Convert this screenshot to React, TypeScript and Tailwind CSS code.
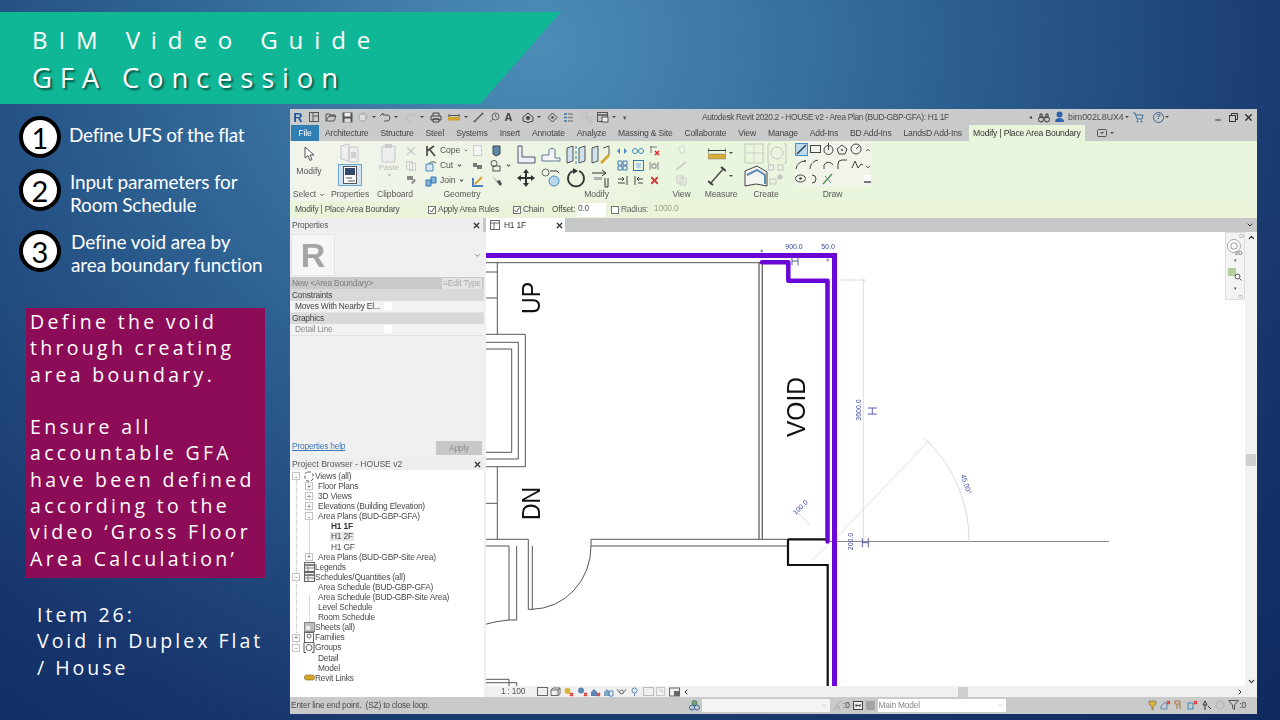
import type { ReactNode } from "react";
import { ChevronDown, ChevronLeft, ChevronRight, ChevronUp, Minus, X } from "lucide-react";

const ui = "[font-family:'Liberation_Sans',Arial,sans-serif]";
const slide = "[font-family:'Open_Sans',Lato,sans-serif]";
const small = "text-[8.4px] tracking-[-0.2px]";

const Svg = ({ w = 14, h = 14, children }: { w?: number; h?: number; children: ReactNode }) => (
  <svg width={w} height={h} viewBox={`0 0 ${w} ${h}`} fill="none" className="shrink-0">
    {children}
  </svg>
);

const Dot = () => <span className="mx-[1px] h-0 w-0 shrink-0 border-x-[2px] border-t-[2px] border-x-transparent border-t-[#444]" />;

const steps = [
  { n: "1", lines: ["Define UFS of the flat"], box: "mb-[11px]", text: "-mt-[5px] ml-[8px] tracking-[-0.3px]" },
  { n: "2", lines: ["Input parameters for", "Room Schedule"], box: "mb-[19px]", text: "mt-[6px] ml-[9px] tracking-[-0.2px]" },
  { n: "3", lines: ["Define void area by", "area boundary function"], box: "", text: "mt-[3px] ml-[10px] tracking-[-0.1px]" },
];

const voidNote = [
  "Define the void",
  "through creating",
  "area boundary.",
  "\u00a0",
  "Ensure all",
  "accountable GFA",
  "have been defined",
  "according to the",
  "video \u2018Gross Floor",
  "Area Calculation\u2019",
];

const tabs = [
  "Architecture", "Structure", "Steel", "Systems", "Insert", "Annotate", "Analyze", "Massing & Site",
  "Collaborate", "View", "Manage", "Add-Ins", "BD Add-Ins", "LandsD Add-Ins",
];

function StepBadge({ n }: { n: string }) {
  return (
    <div className="flex h-[42px] w-[42px] shrink-0 items-center justify-center rounded-full border-[4.5px] border-black bg-white text-[29px] leading-none text-black [font-family:Lato,sans-serif]">
      {n}
    </div>
  );
}

function LeftColumn() {
  return (
    <div className={`${slide} w-[290px] shrink-0 text-white`}>
      <div className="pl-[19px] pt-[7px]">
        {steps.map((s) => (
          <div key={s.n} className={`flex h-[42px] items-center ${s.box}`}>
            <StepBadge n={s.n} />
            <div className={`whitespace-nowrap text-[19px] leading-[23px] [font-family:Lato,sans-serif] ${s.text}`}>
              {s.lines.map((l) => (
                <div key={l}>{l}</div>
              ))}
            </div>
          </div>
        ))}
      </div>
      <div className="ml-[26px] mt-[36px] h-[270px] w-[239px] bg-[#8d0c58] pl-[4px] pt-[1px] text-[19.5px] leading-[26.3px] tracking-[3.300px]">
        {voidNote.map((l, i) => (
          <div key={i} className="whitespace-nowrap">{l}</div>
        ))}
      </div>
      <div className="ml-[37px] mt-[24px] text-[19.5px] leading-[26.3px] tracking-[3px]">
        <div>Item 26:</div>
        <div>Void in Duplex Flat</div>
        <div>/ House</div>
      </div>
    </div>
  );
}

function QuickAccess() {
  return (
    <div className="flex h-full w-[412px] shrink-0 items-center">
      <div className="flex w-[16px] justify-center text-[13px] font-bold leading-none text-[#1c5a9c]">R</div>
      <div className="flex w-[16px] justify-center">
        <Svg w={10} h={10}><rect x=".5" y=".5" width="9" height="9" stroke="#555" /><path d="M4 1v8M4 4h5" stroke="#555" /></Svg>
      </div>
      <div className="flex w-[17px] justify-center">
        <Svg w={12} h={10}><path d="M1 2h4l1 1h4v1H4L1 9zM1 9h8l2-5H4" stroke="#555" /></Svg>
      </div>
      <div className="flex w-[16px] justify-center">
        <Svg w={11} h={11}><rect x=".5" y=".5" width="10" height="10" fill="#555" /><rect x="2.5" y="1" width="6" height="3.5" fill="#eee" /><rect x="2.5" y="6.5" width="6" height="4" fill="#ddd" /></Svg>
      </div>
      <div className="flex w-[16px] justify-center">
        <Svg w={12} h={12}><circle cx="6" cy="6" r="5" fill="#b9b9b9" /><path d="M3 4h5v5H3z" fill="#ddd" /></Svg>
      </div>
      <Dot />
      <div className="flex w-[16px] justify-center">
        <Svg w={12} h={10}><path d="M1 4l3-3v2h4a3 3 0 0 1 0 6H5" stroke="#555" /></Svg>
      </div>
      <Dot />
      <div className="ml-[4px] flex w-[16px] justify-center">
        <Svg w={12} h={10}><path d="M11 4L8 1v2H4a3 3 0 0 0 0 6h3" stroke="#bbb" /></Svg>
      </div>
      <Dot />
      <div className="ml-[2px] flex w-[18px] justify-center">
        <Svg w={12} h={11}><path d="M3 4V1h6v3M1 4h10v4H9V7H3v1H1zM3 7h6v3H3z" stroke="#444" /></Svg>
      </div>
      <div className="flex w-[18px] justify-center">
        <Svg w={12} h={10}><path d="M1 2v3M11 2v3M1 3.5h10" stroke="#555" /><rect y="5" width="12" height="3.5" fill="#d3a62f" /></Svg>
      </div>
      <Dot />
      <div className="ml-[2px] flex w-[15px] justify-center">
        <Svg w={11} h={11}><path d="M1.5 9.5l8-8" stroke="#555" strokeWidth="1.2" /><circle cx="1.5" cy="9.5" r="1" fill="#555" /><circle cx="9.5" cy="1.5" r="1" fill="#555" /></Svg>
      </div>
      <div className="flex w-[16px] justify-center">
        <Svg w={11} h={11}><circle cx="6.5" cy="4.5" r="3.5" stroke="#666" /><path d="M4 7l-3 3" stroke="#666" /><path d="M6.5 2.5v2l1.5 1" stroke="#666" /></Svg>
      </div>
      <div className="flex w-[13px] justify-center text-[11px] font-bold leading-none text-[#444]">A</div>
      <div className="ml-[5px] flex w-[16px] justify-center">
        <Svg w={12} h={12}><path d="M1 6l5-4 5 4v4l-5 1.5L1 10z" stroke="#444" /><circle cx="6" cy="7" r="2" fill="#444" /></Svg>
      </div>
      <Dot />
      <div className="ml-[2px] flex w-[16px] justify-center">
        <Svg w={11} h={11}><path d="M5.5 1l4.5 4.5L5.5 10 1 5.5z" stroke="#444" /><circle cx="5.5" cy="5.5" r="1.3" fill="#444" /></Svg>
      </div>
      <div className="flex w-[16px] justify-center">
        <Svg w={11} h={11}><path d="M1 2h3M1 5.5h3M1 9h3" stroke="#3b74ad" strokeWidth="1.5" /><path d="M5 2h5M5 5.5h5M5 9h5" stroke="#888" strokeWidth="1.5" /></Svg>
      </div>
      <div className="ml-[3px] flex w-[16px] justify-center">
        <Svg w={12} h={12}><rect x="1" y="1" width="5" height="5" stroke="#bbb" /><rect x="6" y="6" width="5" height="5" stroke="#bbb" /></Svg>
      </div>
      <div className="flex w-[16px] justify-center">
        <Svg w={12} h={11}><rect x=".5" y=".5" width="10" height="9" stroke="#555" /><path d="M1 3h9" stroke="#555" strokeWidth="1.5" /><rect x="5" y="5" width="6" height="5" fill="#eee" stroke="#555" /></Svg>
      </div>
      <Dot />
      <span className="ml-[6px] text-[7px] leading-none text-[#555]">▾</span>
    </div>
  );
}

function TitleBar() {
  return (
    <div className={`flex h-[16px] items-center bg-[#c9caca] text-[#4a4a4a] ${ui}`}>
      <QuickAccess />
      <span className="whitespace-nowrap text-[8.4px] leading-none tracking-[-0.35px]">Autodesk Revit 2020.2 - HOUSE v2 - Area Plan (BUD-GBP-GFA): H1 1F</span>
      <div className="ml-auto flex items-center pr-[3px]">
        <span className="text-[6px] leading-none">◂</span>
        <div className="ml-[6px]">
          <Svg w={12} h={11}><circle cx="3" cy="7.5" r="2.5" stroke="#333" /><circle cx="9" cy="7.5" r="2.5" stroke="#333" /><path d="M2 6V2h2v4M8 6V2h2v4M5 5h2" stroke="#333" /></Svg>
        </div>
        <div className="ml-[4px]">
          <Svg w={11} h={12}><circle cx="5.5" cy="3.5" r="3" fill="#2d62ad" /><path d="M1 11c0-3 2-4 4.5-4s4.5 1 4.5 4z" fill="#2d62ad" /></Svg>
        </div>
        <span className="ml-[3px] w-[56px] whitespace-nowrap text-[8.8px] leading-none">bim002L8UX4</span>
        <Dot />
        <div className="ml-[2px]">
          <Svg w={12} h={11}><path d="M1 1h2l2 6h5l1-4H4" stroke="#3d6f9c" /><circle cx="5.5" cy="9.5" r="1" fill="#3d6f9c" /><circle cx="9.5" cy="9.5" r="1" fill="#3d6f9c" /></Svg>
        </div>
        <div className="ml-[9px] flex h-[11px] w-[11px] items-center justify-center rounded-full border border-[#3d5f94] text-[8px] font-bold leading-none text-[#3d5f94]">?</div>
        <Dot />
        <Minus size={8} strokeWidth={3} className="ml-[44px] mt-[5px] text-[#333]" />
        <div className="ml-[7px]">
          <Svg w={9} h={9}><rect x=".5" y="2.5" width="6" height="6" stroke="#333" /><path d="M2.5 2.5v-2h6v6h-2" stroke="#333" /></Svg>
        </div>
        <X size={11} strokeWidth={2.6} className="ml-[5px] text-[#222]" />
      </div>
    </div>
  );
}

function TabBar() {
  return (
    <div className={`flex h-[16px] items-stretch bg-[#c9caca] text-[8.6px] tracking-[-0.2px] text-[#454545] ${ui}`}>
      <div className="ml-[1px] flex w-[28px] items-center justify-center bg-[#2f7fb5] text-white">File</div>
      <div className="ml-[6px] flex items-center gap-[12px]">
        {tabs.map((t) => (
          <span key={t} className="whitespace-nowrap">{t}</span>
        ))}
      </div>
      <div className="ml-[7px] flex w-[116px] items-center justify-center whitespace-nowrap bg-[#e9f5da] text-[#333]">
        Modify | Place Area Boundary
      </div>
      <div className="ml-[12px] flex items-center gap-[2px]">
        <Svg w={10} h={8}><rect x=".5" y=".5" width="9" height="7" rx="1" stroke="#555" /><path d="M3 3h4L5 5z" fill="#555" /></Svg>
        <Dot />
      </div>
    </div>
  );
}

const Panel = ({ w, label, children }: { w: string; label: ReactNode; children: ReactNode }) => (
  <div className={`flex shrink-0 flex-col ${w}`}>
    <div className="h-[45px]">{children}</div>
    <div className="flex h-[15px] items-center justify-center gap-[3px] whitespace-nowrap pt-[2px] text-[8.6px] tracking-[-0.1px] text-[#5a5a5a]">{label}</div>
  </div>
);

const Row = ({ children, className = "" }: { children: ReactNode; className?: string }) => (
  <div className={`flex h-[15px] items-center ${className}`}>{children}</div>
);

const Tool = ({ children, className = "w-[19px]" }: { children: ReactNode; className?: string }) => (
  <div className={`flex shrink-0 justify-center ${className}`}>{children}</div>
);

const SmallTool = ({ children }: { children: ReactNode }) => <Tool className="w-[16px]">{children}</Tool>;

function Ribbon() {
  return (
    <div className={`flex h-[60px] bg-[linear-gradient(90deg,#f1f4ec,#e9f5dc_45%)] ${ui}`}>
      <Panel w="w-[38px]" label={<>Select <ChevronDown size={6} strokeWidth={4} /></>}>
        <div className="flex flex-col items-center pt-[5px]">
          <Svg w={12} h={16}><path d="M2 1v11l3-2.5 2 5 2-1-2-4.5h4z" stroke="#555" fill="#fff" /></Svg>
          <span className="mt-[3px] text-[8.6px] text-[#555]">Modify</span>
        </div>
      </Panel>
      <Panel w="w-[44px]" label="Properties">
        <div className="flex flex-col items-center pt-[2px]">
          <Svg w={20} h={20}><path d="M1 3l8-2v17l-8-2zM9 4h9v15H9z" stroke="#c6c6c6" fill="#eee" /><rect x="11" y="9" width="5" height="6" fill="#cfcfcf" /></Svg>
          <div className="mt-[1px] flex h-[22px] w-[24px] items-center justify-center border border-[#6ea5d0] bg-[#cfe3f3]">
            <Svg w={14} h={18}><rect x=".5" y=".5" width="13" height="17" fill="#fff" stroke="#555" /><rect x="2" y="2" width="10" height="7" fill="#34496b" /><path d="M3 12h6M5 15h7" stroke="#555" /></Svg>
          </div>
        </div>
      </Panel>
      <Panel w="w-[46px]" label="Clipboard">
        <div className="flex">
          <div className="flex w-[34px] flex-col items-center pt-[2px] text-[8px] leading-none text-[#bbb]">
            <Svg w={16} h={20}><rect x="1" y="3" width="13" height="16" rx="1" stroke="#c4c4c4" fill="#eee" /><rect x="4" y="1" width="7" height="4" fill="#ccc" /></Svg>
            <span className="mt-[1px]">Paste</span>
            <span className="text-[6px]">▾</span>
          </div>
          <div className="flex flex-col pt-[2px]">
            <Row><Svg w={10} h={10}><path d="M1 1l8 8M9 1L1 9" stroke="#c9c9c9" strokeWidth="1.4" /></Svg></Row>
            <Row><Svg w={10} h={10}><rect x=".5" y=".5" width="6" height="8" stroke="#ccc" /><rect x="3.5" y="2" width="6" height="7.5" stroke="#ccc" /></Svg></Row>
            <Row><Svg w={11} h={11}><path d="M1 1h6v4H1zM7 9l3-4-2-1-3 4z" fill="#8a8a8a" /></Svg></Row>
          </div>
        </div>
      </Panel>
      <Panel w="w-[88px]" label="Geometry">
        <div className="flex pt-[2px] text-[8.6px] tracking-[-0.1px] text-[#555]">
          <div className="flex w-[50px] flex-col pl-[7px]">
            <Row className="gap-[3px]"><Svg w={12} h={12}><path d="M2 1v10M2 6l7-5M5 5l5 6" stroke="#444" strokeWidth="1.6" /></Svg>Cope<ChevronDown size={5} strokeWidth={5} className="ml-[1px]" /></Row>
            <Row className="gap-[3px]"><Svg w={12} h={12}><path d="M1 4h7v7H1z" stroke="#4d86bd" fill="#d7e6f3" /><path d="M4 4a4 3 0 0 1 7-1" stroke="#555" /></Svg>Cut<ChevronDown size={5} strokeWidth={5} className="ml-[1px]" /></Row>
            <Row className="gap-[3px]"><Svg w={12} h={12}><path d="M1 5h5v6H1zM6 2h5v6H6z" fill="#7fb2db" stroke="#3b79b0" /></Svg>Join<ChevronDown size={5} strokeWidth={5} className="ml-[1px]" /></Row>
          </div>
          <div className="flex flex-col">
            <Row><Tool><Svg w={9} h={11}><rect x=".5" y=".5" width="8" height="10" stroke="#ccc" fill="#f4f4f4" /></Svg></Tool><Tool><Svg w={11} h={12}><path d="M2 1h7v8l-4 2-3-2z" fill="#5d86a8" stroke="#444" /></Svg></Tool></Row>
            <Row><Tool><Svg w={11} h={11}><path d="M1 3h4v4H1zM5 5h5v4H5z" fill="#777" /></Svg></Tool><Tool><Svg w={13} h={12}><circle cx="4" cy="3.5" r="3" stroke="#555" /><rect x="3" y="6" width="7" height="5" stroke="#555" /></Svg></Tool><ChevronDown size={5} strokeWidth={5} /></Row>
            <Row><Tool><Svg w={12} h={12}><path d="M1 3v8h10" stroke="#4a82b7" strokeWidth="2" /><path d="M3 9l7-7" stroke="#d1a431" strokeWidth="2" /></Svg></Tool><Tool><Svg w={11} h={11}><path d="M1 1l5 5 3-1 2 4-2 2-3-4z" fill="#555" /></Svg></Tool></Row>
          </div>
        </div>
      </Panel>
      <Panel w="w-[157px]" label={<span className="pl-[24px]">Modify</span>}>
        <div className="flex pt-[2px]">
          <div className="flex w-[108px] flex-col pl-[7px]">
            <div className="flex h-[23px] items-center">
              <Tool className="w-[25px]"><Svg w={20} h={20}><path d="M2 1h4v11h13v6H2z" stroke="#556" fill="#e9f0f7" /></Svg></Tool>
              <Tool className="w-[25px]"><Svg w={20} h={16}><path d="M1 14h18v-3h-5V3c0-2-6-2-6 0v5H1z" stroke="#5c7b97" fill="#f4f4f4" /></Svg></Tool>
              <Tool className="w-[25px]"><Svg w={20} h={20}><path d="M1 3l6-2v15l-6 2zM13 3l6-2v15l-6 2z" stroke="#555" fill="#cfe2ef" /><path d="M10 1v18" stroke="#2f7fb5" strokeDasharray="3 2" /></Svg></Tool>
              <Tool className="w-[25px]"><Svg w={20} h={20}><path d="M1 3l6-2v15l-6 2z" stroke="#555" fill="#cfe2ef" /><path d="M12 3l6-2v9" stroke="#555" /><path d="M10 18l8-8" stroke="#d1a431" strokeWidth="2.5" /></Svg></Tool>
            </div>
            <div className="flex h-[23px] items-center">
              <Tool className="w-[25px]"><Svg w={20} h={20}><path d="M10 1l3 4h-2v4h4V7l4 3-4 3v-2h-4v4h2l-3 4-3-4h2v-4H5v2l-4-3 4-3v2h4V5H7z" fill="#333" /></Svg></Tool>
              <Tool className="w-[25px]"><Svg w={20} h={19}><rect x="1" y="1" width="7" height="7" rx="3.5" stroke="#666" /><circle cx="13" cy="13" r="5" fill="#bcd7ea" stroke="#4a8cbf" /><path d="M9 3h7l2 2" stroke="#333" /></Svg></Tool>
              <Tool className="w-[25px]"><Svg w={20} h={20}><path d="M13 3a8 8 0 1 1-6 0" stroke="#333" strokeWidth="1.8" /><path d="M7 0v6l5-3z" fill="#333" /></Svg></Tool>
              <Tool className="w-[25px]"><Svg w={20} h={20}><path d="M1 5h14M11 2l4 3-4 3" stroke="#333" /><path d="M3 9h8v3H3z" fill="#b0b0b0" /><path d="M14 10v9h3v-9" stroke="#333" /></Svg></Tool>
            </div>
          </div>
          <div className="flex w-[49px] flex-col">
            <Row><SmallTool><Svg w={12} h={8}><path d="M1 4l3-3v6zM11 4L8 1v6z" fill="#4a8cbf" /></Svg></SmallTool><SmallTool><Svg w={12} h={10}><circle cx="3" cy="5" r="2.5" stroke="#4a8cbf" /><circle cx="9" cy="5" r="2.5" stroke="#4a8cbf" /></Svg></SmallTool><SmallTool><Svg w={11} h={11}><path d="M2 1v7M1 2h7" stroke="#777" /><path d="M6 6l4 4M10 6l-4 4" stroke="#d23" strokeWidth="1.5" /></Svg></SmallTool></Row>
            <Row><SmallTool><Svg w={11} h={11}><path d="M1 1h4v4H1zM6 1h4v4H6zM1 6h4v4H1zM6 6h4v4H6z" stroke="#3d79ae" /></Svg></SmallTool><SmallTool><Svg w={11} h={11}><rect x=".5" y=".5" width="10" height="10" stroke="#3d79ae" /><rect x="3" y="3" width="5" height="5" fill="#b8d2e7" /></Svg></SmallTool><SmallTool><Svg w={10} h={10}><path d="M1 1v8M9 1v8M3 3h4v4H3z" stroke="#888" /></Svg></SmallTool></Row>
            <Row><SmallTool><Svg w={11} h={11}><path d="M1 4h6M5 2l2 2-2 2M1 8h7M10 1v9" stroke="#444" /></Svg></SmallTool><SmallTool><Svg w={11} h={11}><path d="M10 4H4M6 2L4 4l2 2M2 1v9M5 8h5" stroke="#444" /></Svg></SmallTool><SmallTool><X size={11} strokeWidth={4} className="text-[#d23a3a]" /></SmallTool></Row>
          </div>
        </div>
      </Panel>
      <Panel w="w-[37px]" label="View">
        <div className="flex flex-col items-center pt-[2px]">
          <Row><Svg w={10} h={11}><path d="M5 1a3 3 0 0 1 2 5v2H3V6a3 3 0 0 1 2-5z" stroke="#d4d4d4" /></Svg></Row>
          <Row><Svg w={13} h={11}><path d="M1 10l10-8" stroke="#cfcfcf" strokeWidth="2" /></Svg></Row>
          <Row><Svg w={11} h={11}><rect x="1" y="1" width="6" height="7" stroke="#ccc" /><rect x="4" y="3" width="6" height="7" stroke="#ccc" /></Svg></Row>
        </div>
      </Panel>
      <Panel w="w-[42px]" label="Measure">
        <div className="flex flex-col items-center pt-[5px]">
          <div className="flex items-center gap-[2px]">
            <Svg w={18} h={14}><path d="M0 2v5M18 2v5M0 4.5h18" stroke="#333" /><rect y="8" width="18" height="5" fill="#d8ad3a" stroke="#777" strokeWidth=".5" /></Svg>
            <Dot />
          </div>
          <div className="mt-[6px] flex items-center gap-[2px]">
            <Svg w={18} h={20}><path d="M2 18L16 2" stroke="#444" strokeWidth="1.3" /><path d="M0 15l5 4M13 1l5 4" stroke="#444" strokeWidth="2" /></Svg>
            <Dot />
          </div>
        </div>
      </Panel>
      <Panel w="w-[48px]" label="Create">
        <div className="flex flex-col pl-[2px] pt-[2px]">
          <div className="flex gap-[3px]">
            <Svg w={20} h={21}><path d="M1 1h18v19H1z" stroke="#c6c8c4" /><path d="M1 10h18M10 1v19" stroke="#cfd0cc" /></Svg>
            <Svg w={20} h={21}><path d="M3 1H1v19h2M17 1h2v19h-2" stroke="#c6c8c4" /><circle cx="10" cy="10" r="6" stroke="#c6c8c4" /></Svg>
          </div>
          <div className="flex">
            <Svg w={24} h={24}><path d="M1 7l12-5 10 6v14L12 20 1 22z" stroke="#444" fill="#f4f5f1" /><path d="M3 11l10-5 8 5v9" stroke="#5b8db8" strokeWidth="2" /></Svg>
            <Svg w={16} h={21}><rect x=".5" y="1" width="5" height="5" stroke="#c4c4c4" /><rect x="10" y="1" width="5" height="5" stroke="#c4c4c4" /><rect x="2" y="15" width="6" height="5" stroke="#c4c4c4" /><circle cx="12" cy="13" r="2.5" fill="#c4c4c4" /></Svg>
          </div>
        </div>
      </Panel>
      <Panel w="w-[85px]" label="Draw">
        <div className="ml-[5px] flex h-[45px] w-[76px] bg-[#f1f4ea] pt-[1px]">
          <div className="flex flex-col">
            <Row className="gap-[2px]">
              <div className="flex h-[13px] w-[13px] items-center justify-center border border-[#4f8fc4] bg-[#bcd9ef]"><Svg w={11} h={11}><path d="M1 10L10 1" stroke="#234" strokeWidth="1.2" /></Svg></div>
              <Svg w={11} h={10}><rect x=".5" y="1.5" width="10" height="7" stroke="#444" /></Svg>
              <Svg w={11} h={12}><circle cx="5.5" cy="7" r="4.5" stroke="#444" /><path d="M5.5 0v7" stroke="#444" /></Svg>
              <Svg w={12} h={11}><path d="M6 1l5 4-2 5H3L1 5z" stroke="#444" /><circle cx="6" cy="6" r="1" fill="#444" /></Svg>
              <Svg w={12} h={12}><circle cx="6" cy="6" r="5" stroke="#444" /><path d="M6 6l3-3" stroke="#444" /></Svg>
            </Row>
            <Row className="gap-[3px]">
              <Svg w={11} h={11}><path d="M1 10a9 9 0 0 1 9-8" stroke="#444" /><circle cx="10" cy="2" r="1" fill="#444" /></Svg>
              <Svg w={11} h={11}><path d="M1 10a9 9 0 0 1 9-9" stroke="#444" strokeDasharray="6 1" /></Svg>
              <Svg w={11} h={11}><path d="M1 10V6a5 5 0 0 1 9 0" stroke="#444" /></Svg>
              <Svg w={11} h={11}><path d="M1 10V5a4 4 0 0 1 4-4h5" stroke="#444" /></Svg>
              <Svg w={13} h={11}><path d="M1 9l3-7 3 7 3-4 2 1" stroke="#444" /></Svg>
            </Row>
            <Row className="gap-[4px]">
              <Svg w={11} h={9}><ellipse cx="5.5" cy="4.5" rx="5" ry="3.5" stroke="#444" /><circle cx="5.5" cy="4.5" r="1.3" fill="#444" /></Svg>
              <Svg w={8} h={10}><path d="M2 1a4 4 0 0 1 0 8" stroke="#444" /></Svg>
              <Svg w={11} h={12}><path d="M1 11L10 1" stroke="#4f9a4f" strokeWidth="1.5" /><path d="M3 3l6 7" stroke="#888" /></Svg>
            </Row>
          </div>
          <div className="ml-auto flex flex-col items-center pr-[1px] text-[#444]">
            <ChevronUp size={6} strokeWidth={4} className="mt-[5px]" />
            <ChevronDown size={6} strokeWidth={4} className="mt-[11px]" />
            <div className="mt-[5px] h-[8px] w-[7px] border-b-2 border-[#777] bg-white" />
          </div>
        </div>
      </Panel>
    </div>
  );
}

const Check = ({ on = false }: { on?: boolean }) => (
  <div className="flex h-[8px] w-[8px] shrink-0 items-center justify-center border border-[#777] bg-white">
    {on && <Svg w={6} h={6}><path d="M.5 3l2 2 3-4.500" stroke="#555" /></Svg>}
  </div>
);

function OptionsBar() {
  return (
    <div className={`flex h-[17px] items-center bg-[#e9f4da] ${small} text-[#4d4d4d] ${ui}`}>
      <span className="ml-[5px] w-[133px] whitespace-nowrap">Modify | Place Area Boundary</span>
      <Check on />
      <span className="ml-[2px] w-[75px] whitespace-nowrap">Apply Area Rules</span>
      <Check on />
      <span className="ml-[2px] w-[29px]">Chain</span>
      <span className="w-[25px]">Offset:</span>
      <div className="h-[14px] w-[29px] bg-white pl-[1px] leading-[10px]">0.0</div>
      <div className="ml-[5px]"><Check /></div>
      <span className="ml-[2px] w-[33px] text-[#666]">Radius:</span>
      <span className="-mt-[2px] text-[#98a58f]">1000.0</span>
    </div>
  );
}

function TabStrip() {
  return (
    <div className={`flex h-[14px] items-stretch bg-[#c6c7c7] ${small} text-[#444] ${ui}`}>
      <div className="flex w-[193px] items-center justify-between bg-[#eeeeee] px-[2px]">
        <span className="text-[#5a5a5a]">Properties</span>
        <X size={9} strokeWidth={3.5} className="text-[#333]" />
      </div>
      <div className="ml-[3px] flex w-[79px] items-center bg-white pl-[4px]">
        <Svg w={10} h={10}><rect x=".5" y=".5" width="9" height="9" stroke="#666" /><path d="M1 3h8M4 3v6" stroke="#666" /></Svg>
        <span className="ml-[4px] text-[#333]">H1 1F</span>
        <X size={9} strokeWidth={3.5} className="ml-auto mr-[1px] text-[#333]" />
      </div>
      <div className="ml-auto flex items-center pr-[3px]">
        <ChevronDown size={8} strokeWidth={3} className="text-[#333]" />
      </div>
    </div>
  );
}

function PropertyRow({ name, muted }: { name: string; muted?: boolean }) {
  return (
    <div className="flex h-[11.5px] items-center border-b border-[#e2e2e2] bg-[#f2f2f2]">
      <span className={`w-[92px] whitespace-nowrap pl-[5px] ${muted ? "text-[#888]" : "text-[#444]"}`}>{name}</span>
      <div className="ml-[2px] h-[8px] w-[8px] bg-white" />
    </div>
  );
}

function PropertiesPanel() {
  return (
    <div className={`flex h-[226px] flex-col bg-[#f0f0f0] ${small}`}>
      <div className="flex h-[45px] items-center pl-[1px] pr-[3px] pt-[1px]">
        <div className="flex h-[42px] w-[44px] items-center justify-center border border-[#e4e4e4] bg-[#f6f6f6] text-[34px] font-bold leading-none text-[#a4a4a4]">R</div>
        <ChevronDown size={7} strokeWidth={3} className="ml-auto text-[#777]" />
      </div>
      <div className="flex h-[12px] items-center justify-between bg-[#c9c9c9] pl-[2px] text-[#7d7d7d]">
        <span className="whitespace-nowrap">New &lt;Area Boundary&gt;</span>
        <span className="mr-[2px] flex h-[11px] w-[40px] items-center justify-center whitespace-nowrap bg-[#e4e4e4] text-[#aaa]">≡Edit Type</span>
      </div>
      <div className="flex h-[12px] items-center bg-[#d9d9d9] pl-[2px] text-[#444]">Constraints</div>
      <PropertyRow name="Moves With Nearby El..." />
      <div className="flex h-[11.5px] items-center bg-[#d9d9d9] pl-[2px] text-[#444]">Graphics</div>
      <PropertyRow name="Detail Line" muted />
      <div className="mt-auto flex items-end justify-between pb-[3px] pl-[2px] pr-[2px]">
        <span className="pb-[2px] text-[#3d78b5] underline">Properties help</span>
        <span className="flex h-[14px] w-[46px] items-center justify-center bg-[#c8c8c8] text-[#8d8d8d]">Apply</span>
      </div>
    </div>
  );
}

type TreeRow = { label: string; indent: string; box?: "+" | "-"; icon?: string; bold?: boolean; sel?: boolean };

const tree: TreeRow[] = [
  { label: "Views (all)", indent: "pl-[24px]", box: "-", icon: "views" },
  { label: "Floor Plans", indent: "pl-[27px]", box: "+" },
  { label: "3D Views", indent: "pl-[27px]", box: "+" },
  { label: "Elevations (Building Elevation)", indent: "pl-[27px]", box: "+" },
  { label: "Area Plans (BUD-GBP-GFA)", indent: "pl-[27px]", box: "-" },
  { label: "H1 1F", indent: "pl-[40px]", bold: true },
  { label: "H1 2F", indent: "pl-[40px]", sel: true },
  { label: "H1 GF", indent: "pl-[40px]" },
  { label: "Area Plans (BUD-GBP-Site Area)", indent: "pl-[27px]", box: "+" },
  { label: "Legends", indent: "pl-[24px]", icon: "table" },
  { label: "Schedules/Quantities (all)", indent: "pl-[24px]", box: "-", icon: "table" },
  { label: "Area Schedule (BUD-GBP-GFA)", indent: "pl-[27px]" },
  { label: "Area Schedule (BUD-GBP-Site Area)", indent: "pl-[27px]" },
  { label: "Level Schedule", indent: "pl-[27px]" },
  { label: "Room Schedule", indent: "pl-[27px]" },
  { label: "Sheets (all)", indent: "pl-[24px]", icon: "sheet" },
  { label: "Families", indent: "pl-[24px]", box: "+", icon: "family" },
  { label: "Groups", indent: "pl-[24px]", box: "-", icon: "group" },
  { label: "Detail", indent: "pl-[27px]" },
  { label: "Model", indent: "pl-[27px]" },
  { label: "Revit Links", indent: "pl-[24px]", icon: "link" },
];

const boxPos = { "pl-[24px]": "left-[2px]", "pl-[27px]": "left-[15px]", "pl-[40px]": "left-[15px]" } as Record<string, string>;

function TreeIcon({ kind }: { kind: string }) {
  if (kind === "views")
    return <Svg w={12} h={11}><rect x="2" y="1" width="8" height="9" rx="3" stroke="#555" strokeDasharray="3 2" /></Svg>;
  if (kind === "table")
    return <Svg w={11} h={10}><rect x=".5" y=".5" width="10" height="9" stroke="#666" fill="#f2f2f2" /><path d="M1 3h9" stroke="#666" strokeWidth="1.6" /><path d="M1 6h9M4 3v6" stroke="#888" /></Svg>;
  if (kind === "sheet")
    return <Svg w={11} h={10}><rect x=".5" y=".5" width="10" height="9" stroke="#888" fill="#bcbcbc" /><rect x="2" y="4" width="4" height="4" fill="#eee" /></Svg>;
  if (kind === "family")
    return <Svg w={10} h={11}><rect x=".5" y=".5" width="9" height="10" stroke="#666" /><circle cx="5" cy="4" r="2" stroke="#666" /></Svg>;
  if (kind === "group")
    return <Svg w={12} h={11}><path d="M3 .5H1v10h2M9 .5h2v10H9" stroke="#555" /><circle cx="6" cy="5.5" r="3" stroke="#666" /></Svg>;
  return <Svg w={11} h={7}><rect x=".5" y="1" width="10" height="5" rx="2" fill="#d3a62f" stroke="#8a6a1a" strokeWidth=".6" /></Svg>;
}

function ProjectBrowser() {
  return (
    <div className="flex flex-1 flex-col bg-white text-[8.4px] tracking-[-0.2px] text-[#4a4a4a]">
      <div className="flex h-[12px] shrink-0 items-center justify-between bg-[#eeeeee] px-[2px] text-[8.6px] tracking-normal">
        <span className="text-[#5a5a5a]">Project Browser - HOUSE v2</span>
        <X size={9} strokeWidth={3.5} className="text-[#333]" />
      </div>
      <div className="relative pt-[1px]">
        <svg width="30" height="215" className="absolute left-0 top-0">
          <path d="M6.500 6V178M19.500 16V86M19.500 125V156M31 66V96" stroke="#bbb" strokeDasharray="1 1" />
        </svg>
        {tree.map((r) => (
          <div key={r.label} className={`relative flex h-[10.1px] items-center whitespace-nowrap leading-none ${r.indent}`}>
            {r.box && (
              <span className={`absolute flex h-[8px] w-[8px] items-center justify-center border border-[#c4c4c4] bg-white text-[7px] leading-none text-[#555] ${boxPos[r.indent]}`}>
                {r.box}
              </span>
            )}
            {r.icon && <span className="absolute left-[13px] flex w-[12px] justify-center"><TreeIcon kind={r.icon} /></span>}
            <span className={`px-[1px] ${r.bold ? "font-bold text-[#333]" : ""} ${r.sel ? "bg-[#e8e8e8]" : ""}`}>{r.label}</span>
          </div>
        ))}
      </div>
    </div>
  );
}

function IBeam({ x, y, turn }: { x: number; y: number; turn?: boolean }) {
  return (
    <path
      d="M-4.500 -3h9M-4.500 3h9M0 -3v6"
      transform={`translate(${x} ${y})${turn ? " rotate(90)" : ""}`}
      stroke="#4a4f9a"
      strokeWidth=".9"
    />
  );
}

function PlanDrawing() {
  const wall = "#555";
  const purple = "#6a06d6";
  const dim = "#3e4a9c";
  return (
    <svg viewBox="486 232 759 454" width="759" height="454" className="block" fontFamily="'Liberation Sans', Arial, sans-serif">
      <g stroke={wall} fill="none" strokeWidth="1">
        <path d="M486 262.700H762M497.300 262V334M486 272H497M486 298H497" />
        <path d="M759 262V539M762.300 262V539" strokeWidth="1.200" />
        <path d="M486 334.300H525.300V466.700H486M486 342.300H518.300V459H486M486 349H511.700V452.300H486" />
        <path d="M497.300 467V539M486 503.300H497M486 539.300H528.300V609.300H532.300V546M486 546H509V620H516.700V546" />
        <path d="M532 609.300A60 63 0 0 0 591 546V539.300H788M591 546H788" />
        <path d="M486 624.200C494 622 500 621 509 620" />
        <path d="M486 679.300H509V686M486 682.700H516.700V686" />
      </g>
      <path d="M788 539.300H828M788 539.300V565H827.700V686" stroke="#111" strokeWidth="2.200" fill="none" />
      <path d="M827 541.500H1109" stroke="#8a8a8a" strokeWidth="1" />
      <g stroke="#d9dce2" fill="none" strokeWidth="1">
        <path d="M836 538L928 441.700M924 438L932 445" />
        <path d="M928 441.700A139 139 0 0 1 969 541.500" />
        <path d="M863.300 280V541M838 280H866M860 277L866 283" />
        <path d="M810 525L798 513M828 545L812 560" />
      </g>
      <path d="M486 255.500H836.500M834.500 253V686" stroke={purple} strokeWidth="5" fill="none" />
      <path d="M762 262.300H788.300V280.700H827.500V541.500" stroke={purple} strokeWidth="4.500" fill="none" strokeLinejoin="round" strokeLinecap="round" />
      <circle cx="761.700" cy="251" r="1.400" fill="#9aa0b0" />
      <circle cx="827.700" cy="260" r="1.400" fill="#9aa0b0" />
      <g fill={dim} fontSize="7">
        <text x="794" y="248.500" textAnchor="middle">900.0</text>
        <text x="828" y="248.500" textAnchor="middle">50.0</text>
        <text transform="translate(860.500 410) rotate(-90)" textAnchor="middle">3600.0</text>
        <text transform="translate(802 509) rotate(-45)" textAnchor="middle">100.0</text>
        <text transform="translate(853 541.500) rotate(-90)" textAnchor="middle">200.0</text>
        <text transform="translate(964 485) rotate(72)" textAnchor="middle">45.00°</text>
      </g>
      <IBeam x={872.300} y={411} />
      <IBeam x={865.300} y={542.700} turn />
      <IBeam x={795} y={261} turn />
      <g fill="#111" fontSize="25.500">
        <text transform="translate(540 298) rotate(-90)" textAnchor="middle" textLength="32" lengthAdjust="spacingAndGlyphs">UP</text>
        <text transform="translate(540 503.500) rotate(-90)" textAnchor="middle" textLength="33" lengthAdjust="spacingAndGlyphs">DN</text>
        <text transform="translate(804.500 407) rotate(-90)" textAnchor="middle" textLength="60" lengthAdjust="spacingAndGlyphs">VOID</text>
      </g>
    </svg>
  );
}

function NavBar() {
  return (
    <div className="absolute right-0 top-0 flex h-[68px] w-[20px] flex-col items-center border border-[#dcdcdc] bg-[#f3f3f3] pt-[1px]">
      <div className="h-[5px] w-[5px] self-end rounded-full border border-[#bbb]" />
      <Svg w={18} h={18}><circle cx="8" cy="8" r="6.500" stroke="#a9a9a9" fill="#fff" /><rect x="5" y="5" width="6" height="6" rx="2" stroke="#999" /><text x="9" y="17" fontSize="6" fill="#7c8c9a" fontWeight="700">2D</text></Svg>
      <span className="text-[5px] leading-[9px] text-[#555]">▾</span>
      <div className="mt-[3px]">
        <Svg w={14} h={13}><rect width="8" height="8" fill="#b5cf9a" /><circle cx="9.500" cy="8.500" r="2.500" stroke="#555" /><path d="M11.500 10.500l2 2" stroke="#555" /></Svg>
      </div>
      <span className="text-[5px] leading-[14px] text-[#555]">▾</span>
      <div className="mr-[1px] mt-auto mb-[1px] h-[5px] w-[5px] self-end rounded-full border border-[#bbb]" />
    </div>
  );
}

function ViewControls() {
  return (
    <div className={`flex h-[11px] items-center bg-[#f0f0f0] ${small} text-[#555] ${ui}`}>
      <span className="ml-[15px] w-[36px] whitespace-nowrap">1 : 100</span>
      <div className="flex items-center gap-[2.200px]">
        <Svg w={11} h={9}><rect x=".5" y=".5" width="10" height="8" stroke="#666" /></Svg>
        <Svg w={11} h={9}><path d="M1 3l2-2h7v6l-2 1.500H1zM1 3h7v5.500M8 3l2-2" stroke="#666" /></Svg>
        <Svg w={11} h={10}><circle cx="4.500" cy="4" r="3" fill="#d9b33a" /><path d="M7 6l3 3M10 6L7 9" stroke="#d33" strokeWidth="1.400" /></Svg>
        <Svg w={11} h={10}><circle cx="4" cy="3.500" r="3" fill="#5a87b3" /><path d="M7 6l3 3M10 6L7 9" stroke="#d33" strokeWidth="1.400" /></Svg>
        <Svg w={11} h={10}><path d="M1 5l3-3 3 3v4H1z" fill="#5a87b3" /><path d="M7 6l3 3M10 6L7 9" stroke="#d33" strokeWidth="1.400" /></Svg>
        <Svg w={11} h={10}><path d="M1 5l3-3 3 3v4H1z" fill="#7fa5c7" /><path d="M6 4h4v5H6z" stroke="#5a87b3" /></Svg>
        <Svg w={11} h={9}><path d="M1 2c3 6 6 6 9 0" stroke="#777" /><circle cx="5.500" cy="5" r="2" stroke="#777" /></Svg>
        <div className="flex w-[11px] justify-center"><Svg w={7} h={10}><circle cx="3.500" cy="3.500" r="2.500" stroke="#5a87b3" /><path d="M3.500 6v3" stroke="#5a87b3" /></Svg></div>
        <Svg w={11} h={9}><rect x=".5" y=".5" width="10" height="8" stroke="#bbb" /></Svg>
        <Svg w={11} h={9}><rect x=".5" y=".5" width="8" height="8" stroke="#c6c6c6" /><path d="M3 3h3v3" stroke="#c6c6c6" /></Svg>
        <Svg w={11} h={10}><rect x=".5" y="1" width="10" height="8" stroke="#666" /><rect x="5" y="4" width="5" height="5" fill="#666" /></Svg>
      </div>
      <ChevronLeft size={8} strokeWidth={3} className="ml-[2px] text-[#333]" />
      <div className="ml-[268px] h-[10px] w-[10px] bg-[#cfcfcf]" />
      <ChevronRight size={8} strokeWidth={3} className="ml-auto mr-[13px] text-[#333]" />
    </div>
  );
}

function StatusBar() {
  return (
    <div className={`flex h-[17px] items-center bg-[#c9cac9] ${small} text-[#4d4d4d] ${ui}`}>
      <span className="w-[399px] whitespace-pre pl-[1px]">Enter line end point.  (SZ) to close loop.</span>
      <Svg w={11} h={11}><circle cx="5.500" cy="3" r="2.500" fill="#6fa867" stroke="#345" strokeWidth=".5" /><circle cx="3" cy="7.500" r="2.500" stroke="#2f6fa8" /><circle cx="8" cy="7.500" r="2.500" stroke="#2f6fa8" /></Svg>
      <div className="ml-[2px] flex h-[13px] w-[128px] items-center justify-end bg-[#f4f4f4] pr-[2px]"><ChevronDown size={7} className="text-[#aaa]" /></div>
      <div className="ml-[3px]"><Svg w={9} h={11}><path d="M1 10l3-5 4-4M3 6h3v4" stroke="#aaa" /></Svg></div>
      <span className="ml-[1px] text-[#444]">:0</span>
      <div className="ml-[3px]"><Svg w={10} h={9}><rect x=".5" y=".5" width="9" height="8" stroke="#444" fill="#eee" /><path d="M3 3v3M7 3v3M3 4.500h4" stroke="#444" /></Svg></div>
      <div className="ml-[3px]"><Svg w={9} h={9}><rect width="9" height="9" fill="#a4a4a4" /></Svg></div>
      <div className="ml-[3px] flex h-[13px] w-[128px] items-center justify-between bg-white pl-[1px] pr-[2px] text-[#888]">
        Main Model
        <ChevronDown size={7} className="text-[#aaa]" />
      </div>
      <div className="ml-auto flex items-center gap-[3px] pr-[11px]">
        <Svg w={9} h={10}><path d="M1 1h7v3L5 7v3H4V7L1 4z" fill="#d9b33a" stroke="#555" strokeWidth=".5" /></Svg>
        <Svg w={11} h={10}><path d="M1 6l4-4 2 2v5H1z" stroke="#5a87b3" /><path d="M7 1l3 3M10 1L7 4" stroke="#d33" strokeWidth="1.300" /></Svg>
        <Svg w={10} h={10}><path d="M1 1h5v3H1zM3 4v5M6 4v5" stroke="#a5793b" /></Svg>
        <Svg w={11} h={10}><path d="M1 3h5v6H1z" stroke="#3b86b5" /><path d="M7 1l3 3M10 1L7 4" stroke="#d33" strokeWidth="1.300" /></Svg>
        <Svg w={11} h={11}><path d="M4 1l2 4H2zM7 6l3 3M4 5v5" stroke="#333" /></Svg>
        <Svg w={10} h={10}><circle cx="5" cy="5" r="4" stroke="#b9b9b9" strokeWidth="1.500" /></Svg>
        <div className="flex items-center text-[#444]">
          <Svg w={11} h={10}><path d="M.5 .5h10L6.500 5v4.500L4.500 8V5z" stroke="#555" /></Svg>
          :0
        </div>
      </div>
    </div>
  );
}

function RevitWindow() {
  return (
    <div className="flex h-[605px] w-[967px] shrink-0 flex-col overflow-hidden blur-[0.4px]">
      <TitleBar />
      <TabBar />
      <Ribbon />
      <OptionsBar />
      <TabStrip />
      <div className={`flex min-h-0 flex-1 bg-[#f0f0f0] ${ui}`}>
        <div className="flex w-[194px] shrink-0 flex-col">
          <PropertiesPanel />
          <ProjectBrowser />
        </div>
        <div className="ml-[2px] flex min-w-0 flex-1 flex-col bg-white">
          <div className="flex min-h-0 flex-1">
            <div className="relative h-[454px] w-[759px] shrink-0 overflow-hidden">
              <PlanDrawing />
              <NavBar />
            </div>
            <div className="flex flex-1 flex-col items-center bg-[#f2f2f2] pt-[1px] text-[#333]">
              <ChevronUp size={9} strokeWidth={3} />
              <div className="mt-[212px] h-[12px] w-[10px] bg-[#cfcfcf]" />
              <ChevronDown size={9} strokeWidth={3} className="mt-auto" />
            </div>
          </div>
          <ViewControls />
        </div>
      </div>
      <StatusBar />
    </div>
  );
}

export default function App() {
  return (
    <div className="h-[720px] w-[1280px] overflow-hidden bg-[radial-gradient(ellipse_at_42%_6%,#4c8db8_0%,#2d6192_38%,#16336b_78%,#102a5f_100%)]">
      <div className="pt-[12px]">
        <div className={`${slide} flex h-[92px] w-[561px] flex-col bg-[#10b796] pl-[32px] pt-[14px] text-white [clip-path:polygon(0_0,100%_0,480px_100%,0_100%)]`}>
          <div className="whitespace-nowrap text-[24px] leading-[28px] tracking-[10.900px]">BIM Video Guide</div>
          <div className="mt-[8px] whitespace-nowrap text-[27.5px] leading-[32px] tracking-[7.800px] [text-shadow:2px_2px_2px_rgba(0,0,0,0.55)]">GFA Concession</div>
        </div>
      </div>
      <div className="mt-[5px] flex items-start">
        <LeftColumn />
        <RevitWindow />
      </div>
    </div>
  );
}
